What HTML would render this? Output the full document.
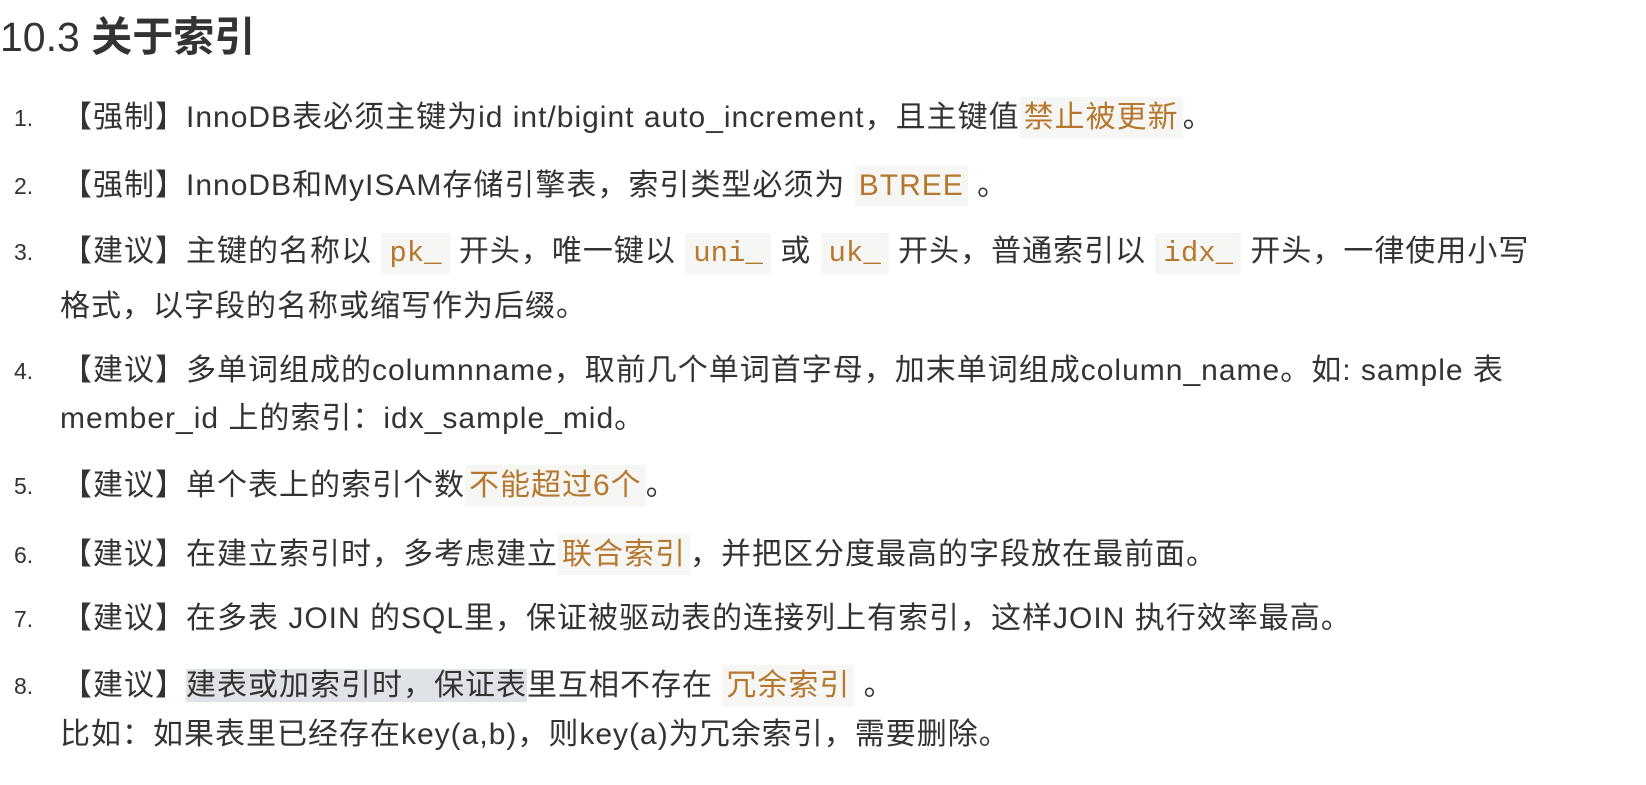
<!DOCTYPE html>
<html><head><meta charset="utf-8"><style>
body{margin:0;background:#fff;width:1646px;height:785px;overflow:hidden;font-family:"Liberation Sans","Noto Sans CJK SC",sans-serif;color:#333;}
h1{position:absolute;left:0;top:12px;margin:0;font-size:41px;font-weight:bold;color:#333;line-height:50px;}
h1 .n{font-weight:normal;}
.row{position:absolute;left:0;font-size:30px;letter-spacing:1px;line-height:40px;white-space:nowrap;}
.num{position:absolute;left:14px;width:40px;font-size:23px;letter-spacing:0;}
.t{position:absolute;left:62px;}
code{font-family:"Liberation Mono",monospace;font-size:29px;letter-spacing:0;color:#b5782e;background:#f6f6f4;padding:4px 8px;border-radius:3px;}
.c{color:#b5782e;background:#f6f6f4;padding:4px 4px;}
.hl{background:#dfe3e8;}
</style></head><body>
<h1><span class="n">10.3</span> 关于索引</h1>
<div class="row" style="top:98px"><span class="num">1.</span><span class="t">【强制】InnoDB表必须主键为id int/bigint auto_increment，且主键值<span class="c">禁止被更新</span>。</span></div>
<div class="row" style="top:166px"><span class="num">2.</span><span class="t">【强制】InnoDB和MyISAM存储引擎表，索引类型必须为 <span class="c">BTREE</span> 。</span></div>
<div class="row" style="top:232px"><span class="num">3.</span><span class="t">【建议】主键的名称以 <code>pk_</code> 开头，唯一键以 <code>uni_</code> 或 <code>uk_</code> 开头，普通索引以 <code>idx_</code> 开头，一律使用小写</span></div>
<div class="row" style="top:287px"><span class="t" style="left:60px">格式，以字段的名称或缩写作为后缀。</span></div>
<div class="row" style="top:351px"><span class="num">4.</span><span class="t">【建议】多单词组成的columnname，取前几个单词首字母，加末单词组成column_name。如: sample 表</span></div>
<div class="row" style="top:399px"><span class="t" style="left:60px">member_id 上的索引：idx_sample_mid。</span></div>
<div class="row" style="top:466px"><span class="num">5.</span><span class="t">【建议】单个表上的索引个数<span class="c">不能超过6个</span>。</span></div>
<div class="row" style="top:535px"><span class="num">6.</span><span class="t">【建议】在建立索引时，多考虑建立<span class="c">联合索引</span>，并把区分度最高的字段放在最前面。</span></div>
<div class="row" style="top:599px"><span class="num">7.</span><span class="t">【建议】在多表 JOIN 的SQL里，保证被驱动表的连接列上有索引，这样JOIN 执行效率最高。</span></div>
<div class="row" style="top:666px"><span class="num">8.</span><span class="t">【建议】<span class="hl">建表或加索引时，保证表</span>里互相不存在 <span class="c">冗余索引</span> 。</span></div>
<div class="row" style="top:715px"><span class="t" style="left:60px">比如：如果表里已经存在key(a,b)，则key(a)为冗余索引，需要删除。</span></div>
</body></html>
